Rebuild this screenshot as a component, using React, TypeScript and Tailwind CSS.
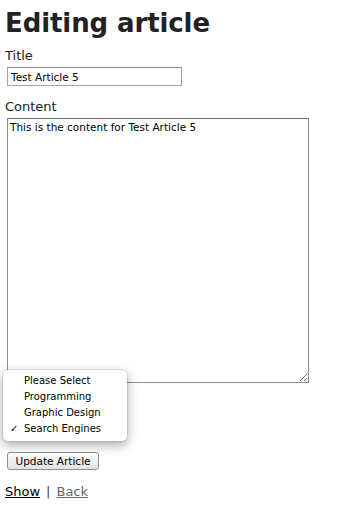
import { useState } from "react";

const categories = ["Please Select", "Programming", "Graphic Design", "Search Engines"];

export default function App() {
  const [title, setTitle] = useState("Test Article 5");
  const [content, setContent] = useState("This is the content for Test Article 5");
  const selected = "Search Engines";

  return (
    <div className="relative min-h-[519px] bg-white pl-[5px] text-[#222] font-['DejaVu_Sans',sans-serif]">
      <h1 className="pt-[8px] text-[26px] font-bold leading-[30px] tracking-[-0.1px]">Editing article</h1>

      <form className="flex flex-col items-start">
        <label className="mt-[10px] text-[13px] leading-[16px]">Title</label>
        <input
          value={title}
          onChange={(e) => setTitle(e.target.value)}
          className="ml-[2px] mt-[3px] h-[19px] w-[175px] border border-[#a3a3a3] border-t-[#8a8a8a] px-[3px] text-[10.5px] leading-[17px] text-black outline-none"
        />

        <label className="mt-[13px] text-[13px] leading-[16px]">Content</label>
        <textarea
          value={content}
          onChange={(e) => setContent(e.target.value)}
          className="ml-[2px] mt-[3px] h-[265px] w-[302px] border border-[#8c8c8c] border-t-[#6e6e6e] px-[2px] py-[1px] text-[10.5px] leading-[14px] text-black outline-none"
        />

        {/* category label + closed select, covered by the open menu */}
        <div className="mt-[17px] h-[16px]" aria-label="Category" />
        <div className="ml-[2px] mt-[5px] h-[16px] w-[112px] rounded-[4px] border border-[#aaa] bg-[#f4f4f4]" />

        <button
          type="button"
          className="ml-[2px] mt-[15px] h-[18px] w-[92px] rounded-[3px] border border-[#8e8e8e] bg-gradient-to-b from-[#fdfdfd] to-[#e2e2e2] text-[10.5px] leading-[16px] text-black"
        >
          Update Article
        </button>
      </form>

      <div className="mt-[14px] text-[13px] leading-[16px]">
        <a className="text-black underline">Show</a>
        <span className="mx-[6px] text-[#444]">|</span>
        <a className="text-[#666] underline">Back</a>
      </div>

      {/* open select menu */}
      <div className="absolute left-[3px] top-[370px] h-[71px] w-[124px] rounded-[5px] bg-white pt-[3px] shadow-[0_4px_12px_rgba(0,0,0,0.35)] ring-1 ring-[rgba(0,0,0,0.08)]">
        {categories.map((c) => (
          <div key={c} className="relative h-[16px] pl-[21px] text-[10px] leading-[16px] text-black">
            {c === selected && <span className="absolute left-[7px] top-0 text-[10px]">✓</span>}
            {c}
          </div>
        ))}
      </div>
    </div>
  );
}
